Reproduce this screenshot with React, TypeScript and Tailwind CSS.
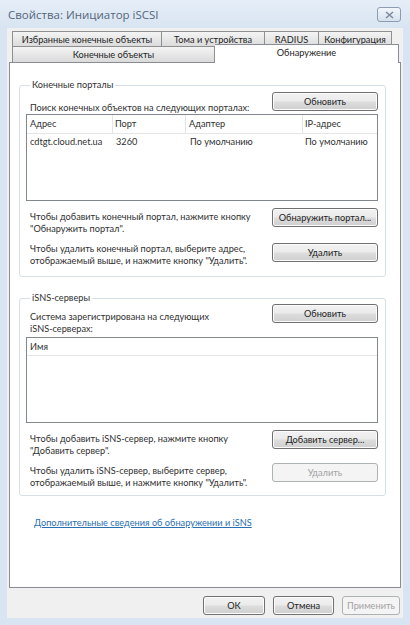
import React from 'react';

const btn =
  "h-[19px] flex items-center justify-center rounded-[3px] border border-[#707070] bg-[linear-gradient(to_bottom,#f2f2f2_0%,#ebebeb_48%,#dddddd_52%,#cfcfcf_100%)] text-[#1e1e1e] shadow-[inset_0_0_0_1px_#fcfcfc]";
const btnOff =
  "h-[19px] flex items-center justify-center rounded-[3px] border border-[#adb2b5] bg-[#f4f4f4] text-[#a3a3a3]";

const Btn: React.FC<{ w: string; off?: boolean; children: React.ReactNode }> = ({ w, off, children }) => (
  <div className={`${off ? btnOff : btn} ${w} shrink-0`}>{children}</div>
);

const tabBack =
  "h-[16px] flex items-center justify-center border-t border-r border-[#8e8f8f] bg-[linear-gradient(to_bottom,#f4f4f4,#dadada)] text-[#1e1e1e]";

export default function App() {
  return (
    <div className="w-[410px] h-[625px] bg-[#d8e4f1] flex flex-col font-['Lato',sans-serif] text-[9.2px] leading-[12px] text-[#303030]">
      {/* title bar */}
      <div className="h-[28px] flex items-start justify-between pl-[8px] pr-[9px] bg-[linear-gradient(to_bottom,#e6eef8,#d8e4f1)]">
        <span className="mt-[8px] font-['Open_Sans',sans-serif] text-[11.5px] leading-[14px] text-[#55657a]">Свойства: Инициатор iSCSI</span>
        <div className="mt-[7px] w-[24px] h-[15px] rounded-[3px] border border-[#8c9cb1] bg-[linear-gradient(to_bottom,#f2f6fb,#d6e1ee)] flex items-center justify-center">
          <svg width="9" height="8" viewBox="0 0 9 8">
            <path d="M1 1 L8 7 M8 1 L1 7" stroke="#7d8a9c" strokeWidth="1.6" />
          </svg>
        </div>
      </div>

      {/* client */}
      <div className="mx-[7px] mb-[7px] flex-1 bg-[#f0f0f0] flex flex-col px-[2px] pt-[3px]">
        {/* tabs */}
        <div className="h-[31px] flex flex-col">
          <div className="flex pl-[3px]">
            <div className={`${tabBack} w-[150px] border-l`}>Избранные конечные объекты</div>
            <div className={`${tabBack} w-[103px]`}>Тома и устройства</div>
            <div className={`${tabBack} w-[54px]`}>RADIUS</div>
            <div className={`${tabBack} w-[73px]`}>Конфигурация</div>
          </div>
          <div className="h-[15px] flex items-end pl-[3px]">
            <div className={`${tabBack} h-[15px] w-[203px] border-l`}>Конечные объекты</div>
            <div className="relative z-10 -mb-[1px] w-[184px] h-[19px] bg-white border-t border-r border-[#898c95] flex items-start justify-center pt-[2px] text-[#1e1e1e]">
              Обнаружение
            </div>
          </div>
        </div>

        {/* tab panel */}
        <div className="h-[526px] border border-[#898c95] bg-white flex flex-col pl-[9px] pr-[14px] pt-[15px]">
          {/* group 1 */}
          <fieldset className="border border-[#d5dfe5] rounded-[3px] pl-[6px] pr-[7px] pb-[9px]">
            <legend className="ml-[4px] px-[2px] leading-[14px]">Конечные порталы</legend>
            <div className="flex items-end justify-between">
              <span className="pl-[4px] -mb-[3px]">Поиск конечных объектов на следующих порталах:</span>
              <Btn w="w-[106px]">Обновить</Btn>
            </div>
            <div className="mt-[3px] h-[87px] border border-[#82878f] bg-white">
              <div className="h-[19px] flex border-b border-[#e5e5e5]">
                <div className="w-[86px] pl-[3px] flex items-center border-r border-[#e5e5e5]">Адрес</div>
                <div className="w-[73px] pl-[2px] flex items-center border-r border-[#e5e5e5]">Порт</div>
                <div className="w-[117px] pl-[3px] flex items-center border-r border-[#e5e5e5]">Адаптер</div>
                <div className="flex-1 pl-[2px] flex items-center">IP-адрес</div>
              </div>
              <div className="h-[15px] flex">
                <div className="w-[86px] pl-[3px] flex items-center">cdtgt.cloud.net.ua</div>
                <div className="w-[73px] pl-[3px] flex items-center">3260</div>
                <div className="w-[117px] pl-[4px] flex items-center">По умолчанию</div>
                <div className="flex-1 pl-[2px] flex items-center">По умолчанию</div>
              </div>
            </div>
            <div className="mt-[7px] flex justify-between items-start">
              <span className="pl-[4px] pt-[3px]">
                Чтобы добавить конечный портал, нажмите кнопку
                <br />
                "Обнаружить портал".
              </span>
              <Btn w="w-[106px]">Обнаружить портал...</Btn>
            </div>
            <div className="mt-[8px] flex justify-between items-start">
              <span className="pl-[4px]">
                Чтобы удалить конечный портал, выберите адрес,
                <br />
                отображаемый выше, и нажмите кнопку "Удалить".
              </span>
              <Btn w="w-[106px]">Удалить</Btn>
            </div>
          </fieldset>

          {/* group 2 */}
          <fieldset className="mt-[14px] border border-[#d5dfe5] rounded-[3px] pl-[6px] pr-[7px] pb-[6px]">
            <legend className="ml-[4px] px-[2px] leading-[14px]">iSNS-серверы</legend>
            <div className="-mt-[1px] flex justify-between items-start">
              <span className="pl-[4px] pt-[7px]">
                Система зарегистрирована на следующих
                <br />
                iSNS-серверах:
              </span>
              <Btn w="w-[106px]">Обновить</Btn>
            </div>
            <div className="mt-[2px] h-[86px] border border-[#82878f] bg-white">
              <div className="h-[18px] flex items-center pl-[3px] border-b border-[#e5e5e5]">Имя</div>
            </div>
            <div className="mt-[7px] flex justify-between items-start">
              <span className="pl-[4px] pt-[3px]">
                Чтобы добавить iSNS-сервер, нажмите кнопку
                <br />
                "Добавить сервер".
              </span>
              <Btn w="w-[106px]">Добавить сервер...</Btn>
            </div>
            <div className="mt-[6px] flex justify-between items-start">
              <span className="pl-[4px] pt-[2px]">
                Чтобы удалить iSNS-сервер, выберите сервер,
                <br />
                отображаемый выше, и нажмите кнопку "Удалить".
              </span>
              <Btn w="w-[106px]" off>Удалить</Btn>
            </div>
          </fieldset>

          <div className="mt-[21px] pl-[15px]">
            <span className="text-[#2a6fb0] underline underline-offset-[1px]">
              Дополнительные сведения об обнаружении и iSNS
            </span>
          </div>
        </div>

        {/* footer buttons */}
        <div className="mt-[8px] flex justify-end gap-[8px] pr-[1px]">
          <Btn w="w-[62px]">ОК</Btn>
          <Btn w="w-[61px]">Отмена</Btn>
          <Btn w="w-[58px]" off>Применить</Btn>
        </div>
      </div>
    </div>
  );
}
